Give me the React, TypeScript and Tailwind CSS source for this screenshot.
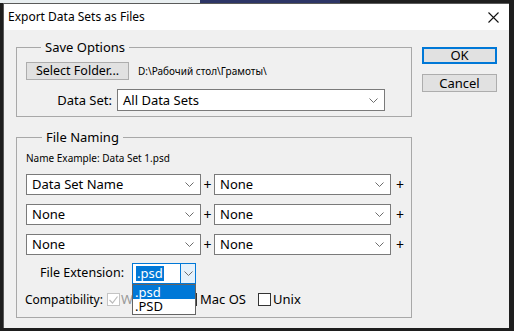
import React from "react"

const font = { fontFamily: '"Noto Sans", "DejaVu Sans", sans-serif' }

function Chevron({ className = "" }: { className?: string }) {
  return (
    <svg width="9" height="5" viewBox="0 0 9 5" className={className}>
      <path d="M0.5 0.5 L4.5 4.5 L8.5 0.5" fill="none" stroke="#6d6d6d" strokeWidth="1" />
    </svg>
  )
}

function Select({ value, w }: { value: string; w: string }) {
  return (
    <div className={`${w} h-[21px] bg-white border border-[#7a7a7a] flex items-center pl-[5px] pr-[6px]`}>
      <span className="flex-1 text-[13px] leading-none text-black">{value}</span>
      <Chevron />
    </div>
  )
}

function Checkbox({ checked = false, disabled = false }: { checked?: boolean; disabled?: boolean }) {
  return (
    <div
      className={`w-[13px] h-[13px] shrink-0 border flex items-center justify-center bg-white ${
        disabled ? "border-[#c4c4c4]" : "border-[#333]"
      }`}
    >
      {checked && (
        <svg width="9" height="8" viewBox="0 0 9 8">
          <path d="M0.5 4 L3.5 7 L8.5 0.5" fill="none" stroke="#bcbcbc" strokeWidth="1.2" />
        </svg>
      )}
    </div>
  )
}

function NamingRow({ left }: { left: string }) {
  return (
    <div className="flex items-center">
      <Select value={left} w="w-[175px]" />
      <span className="w-[13px] text-center text-[14px] leading-none">+</span>
      <Select value="None" w="w-[177px]" />
      <span className="w-[18px] text-center text-[14px] leading-none">+</span>
    </div>
  )
}

export default function App() {
  return (
    <div className="w-[514px] h-[331px] bg-[#1e1e1e] overflow-hidden relative" style={font}>
      <div className="h-[3px] flex">
        <div className="w-[200px] bg-[#e8eef0]" />
        <div className="w-[140px] bg-[#2c3566]" />
        <div className="flex-1 bg-[#1e1e1e]" />
      </div>
      <div className="ml-[3px] w-[506px] h-[325px] border-l border-t border-[#5a5a5a] bg-[#f0f0f0] flex flex-col relative">
        <div className="h-[26px] bg-white flex items-center pl-[4px] pr-[10px] shrink-0">
          <span className="flex-1 text-[12px] text-black">Export Data Sets as Files</span>
          <svg width="11" height="11" viewBox="0 0 11 11">
            <path d="M0.5 0.5 L10.5 10.5 M10.5 0.5 L0.5 10.5" stroke="#111" strokeWidth="1.1" />
          </svg>
        </div>

        <div className="flex pl-[12px] text-black">
          <div className="w-[396px] flex flex-col pt-[8px]">
            <fieldset className="border border-[#a8a8a8] pl-[9px] pb-[5px]">
              <legend className="ml-[15px] px-[4px] text-[13px] leading-[18px]">Save Options</legend>
              <div className="flex items-center gap-[9px] mt-[6px]">
                <button className="w-[103px] h-[18px] bg-[#e1e1e1] border border-[#adadad] text-[12.5px] leading-none">
                  Select Folder...
                </button>
                <span className="text-[10px] leading-none">D:\Рабочий стол\Грамоты\</span>
              </div>
              <div className="flex items-center mt-[9px]">
                <span className="w-[87px] text-right text-[13px] leading-none pr-[1px]">Data Set:</span>
                <div className="ml-[4px]">
                  <Select value="All Data Sets" w="w-[268px] h-[22px]" />
                </div>
              </div>
            </fieldset>

            <fieldset className="border border-[#a8a8a8] pl-[9px] mt-[11px] h-[190px]">
              <legend className="ml-[16px] px-[4px] text-[13px] leading-[18px]">File Naming</legend>
              <div className="text-[10px] leading-none mt-[7px]">Name Example: Data Set 1.psd</div>
              <div className="flex flex-col gap-[9px] mt-[11px]">
                <NamingRow left="Data Set Name" />
                <NamingRow left="None" />
                <NamingRow left="None" />
              </div>
              <div className="flex items-center mt-[8px]">
                <span className="w-[98px] text-right text-[12.5px] leading-none">File Extension:</span>
                <div className="ml-[8px] w-[64px] h-[21px] bg-white border border-[#0078d7] flex items-stretch">
                  <div className="flex-1 flex items-center pl-[3px]">
                    <span className="bg-[#0078d7] text-white text-[13px] leading-[15px] px-[1px]">.psd</span>
                  </div>
                  <div className="w-[15px] bg-[#e5f1fb] border-l border-[#0078d7] flex items-center justify-center">
                    <Chevron />
                  </div>
                </div>
              </div>
              <div className="flex items-center mt-[9px] -ml-[1px] text-[12px] leading-none">
                <span className="w-[82px] whitespace-nowrap">Compatibility:</span>
                <Checkbox checked disabled />
                <span className="ml-[1px] w-[63px] text-[#9a9a9a] text-[13px]">Windows</span>
                <Checkbox />
                <span className="ml-[3px] w-[58px] text-[13px]">Mac OS</span>
                <Checkbox />
                <span className="ml-[2px] text-[13px]">Unix</span>
              </div>
            </fieldset>
          </div>

          <div className="ml-[10px] pt-[17px] flex flex-col gap-[10px]">
            <button className="w-[75px] h-[17px] bg-[#e1e1e1] border-2 border-[#0078d7] text-[13px] leading-none">
              OK
            </button>
            <button className="w-[75px] h-[18px] bg-[#e1e1e1] border border-[#adadad] text-[13px] leading-none">
              Cancel
            </button>
          </div>
        </div>

        <div className="absolute left-[128px] top-[280px] w-[64px] bg-white border border-[#646464] text-[13px] leading-none z-10">
          <div className="h-[14px] bg-[#0078d7] text-white pl-[2px] flex items-center">.psd</div>
          <div className="h-[15px] pl-[2px] flex items-center">.PSD</div>
        </div>
      </div>
    </div>
  )
}
